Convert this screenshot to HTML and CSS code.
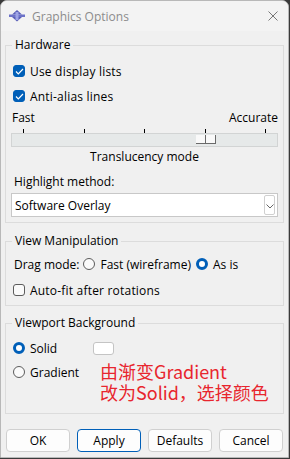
FILE: index.html
```html
<!DOCTYPE html>
<html>

<head>
    <title>Graphics Options</title>
    <link rel="stylesheet" href="styles.css">
</head>

<body>
    <div class="window">
        <div class="titlebar">
            <svg class="app-icon" width="16" height="12" viewBox="0 0 16 12">
                <polygon points="8,0 3,4.5 13,4.5" fill="#5a5fb8" />
                <rect x="0" y="4.5" width="16" height="2.5" fill="#6c72c8" />
                <polygon points="3,7 13,7 8,11.5" fill="#5a5fb8" />
                <rect x="6.5" y="2" width="3" height="8" fill="#9ea4e6" />
            </svg>
            <span class="title">Graphics Options</span>
            <svg class="close" width="10" height="10" viewBox="0 0 10 10">
                <path d="M0.5 0.5 L9.5 9.5 M9.5 0.5 L0.5 9.5" stroke="#777" stroke-width="1" />
            </svg>
        </div>

        <div class="content">
            <fieldset class="group hardware">
                <legend>Hardware</legend>
                <label class="row check-row first">
                    <span class="checkbox checked"><svg width="9" height="7" viewBox="0 0 9 7"><path d="M1 3.5 L3.3 5.8 L8 1" stroke="#fff" stroke-width="1.2" fill="none" /></svg></span>
                    Use display lists
                </label>
                <label class="row check-row second">
                    <span class="checkbox checked"><svg width="9" height="7" viewBox="0 0 9 7"><path d="M1 3.5 L3.3 5.8 L8 1" stroke="#fff" stroke-width="1.2" fill="none" /></svg></span>
                    Anti-alias lines
                </label>
                <div class="speed-labels">
                    <span>Fast</span>
                    <span>Accurate</span>
                </div>
                <div class="ticks">
                    <span></span><span></span><span></span><span></span><span></span>
                </div>
                <div class="track">
                    <div class="thumb"><span></span><span></span></div>
                </div>
                <div class="caption">Translucency mode</div>
                <div class="field-label">Highlight method:</div>
                <div class="select">
                    <span>Software Overlay</span>
                    <span class="drop">
                        <svg width="8" height="5" viewBox="0 0 8 5"><path d="M0.5 0.5 L4 4 L7.5 0.5" stroke="#666" fill="none" /></svg>
                    </span>
                </div>
            </fieldset>

            <fieldset class="group view">
                <legend>View Manipulation</legend>
                <div class="row drag-row">
                    <span class="drag-label">Drag mode:</span>
                    <label class="radio-opt"><span class="radio"></span>Fast (wireframe)</label>
                    <label class="radio-opt"><span class="radio selected"></span>As is</label>
                </div>
                <label class="row check-row autofit">
                    <span class="checkbox"></span>
                    Auto-fit after rotations
                </label>
            </fieldset>

            <fieldset class="group viewport">
                <legend>Viewport Background</legend>
                <div class="row solid-row">
                    <label class="radio-opt bg-opt"><span class="radio selected"></span>Solid</label>
                    <span class="swatch"></span>
                </div>
                <div class="gradient-row">
                    <label class="radio-opt bg-opt"><span class="radio"></span>Gradient</label>
                    <div class="note">
                        <div>由渐变Gradient</div>
                        <div>改为Solid，选择颜色</div>
                    </div>
                </div>
            </fieldset>

            <div class="buttons">
                <button>OK</button>
                <button class="default">Apply</button>
                <button>Defaults</button>
                <button>Cancel</button>
            </div>
        </div>
    </div>
</body>

</html>
```

FILE: styles.css
```css
html {
    background-color: #3a3a3a;
}

body {
    margin: 0;
    font-family: "Open Sans", "Noto Sans CJK SC", sans-serif;
    font-size: 12px;
    color: #000;
}

.window {
    width: 287px;
    height: 456px;
    background-color: #f0f0f0;
    border: 1px solid #b8b8b8;
    border-radius: 7px 7px 0 0;
    overflow: hidden;
}

.titlebar {
    height: 30px;
    display: flex;
    align-items: center;
    padding-left: 8px;
    background-color: #f3f3f3;
}

.app-icon {
    margin-right: 7px;
}

.title {
    color: #8c8c8c;
    flex: 1;
}

.close {
    margin-right: 10px;
}

.content {
    padding: 0 4px;
}

.group {
    margin: 0;
    padding: 0 5px;
    border: 1px solid #dcdcdc;
    border-radius: 0;
}

.group legend {
    padding: 0 3px;
    margin-left: 1px;
    line-height: 16px;
}

.hardware {
    margin-top: 6px;
    padding-bottom: 5px;
}

.row {
    display: flex;
    align-items: center;
    height: 20px;
}

.check-row {
    padding-left: 2px;
    letter-spacing: 0.2px;
}

.first {
    margin-top: 8px;
}

.second {
    margin-top: 5px;
}

.checkbox {
    width: 12px;
    height: 12px;
    box-sizing: border-box;
    border: 1px solid #5c5c5c;
    border-radius: 3px;
    background-color: #fafafa;
    margin-right: 5px;
    display: flex;
    align-items: center;
    justify-content: center;
}

.checkbox.checked {
    background-color: #005fb8;
    border-color: #005fb8;
}

.speed-labels {
    display: flex;
    justify-content: space-between;
    height: 18px;
    line-height: 18px;
    margin-top: 3px;
    padding: 0 0 0 1px;
}

.ticks {
    display: flex;
    justify-content: space-between;
    padding: 0 12px;
    margin-top: 2px;
    height: 4px;
}

.ticks span {
    width: 1px;
    height: 4px;
    background-color: #000;
}

.track {
    position: relative;
    height: 14px;
    box-sizing: border-box;
    background-color: #e6e9e9;
    border: 1px solid #d2d4d4;
}

.thumb {
    position: absolute;
    left: 184px;
    top: 1px;
    display: flex;
}

.thumb span {
    width: 9px;
    height: 8px;
    background-color: #f9f9f9;
    border-right: 1px solid #6a6a6a;
    border-bottom: 1px solid #6a6a6a;
}

.caption {
    text-align: center;
    margin-top: 2px;
    height: 16px;
    line-height: 16px;
}

.field-label {
    margin-top: 9px;
    padding-left: 3px;
    height: 16px;
    line-height: 16px;
}

.select {
    margin-top: 3px;
    height: 24px;
    box-sizing: border-box;
    border: 1px solid #c8c8c8;
    background-color: #fff;
    display: flex;
    align-items: center;
    justify-content: space-between;
    padding: 0 2px 0 3px;
}

.drop {
    width: 11px;
    height: 20px;
    box-sizing: border-box;
    border: 1px solid #d0d0d0;
    border-radius: 2px;
    display: flex;
    align-items: flex-end;
    justify-content: center;
    padding-bottom: 5px;
}

.view {
    margin-top: 10px;
    padding-bottom: 5px;
}

.drag-row {
    margin-top: 5px;
    padding-left: 3px;
}

.drag-label {
    margin-right: 4px;
}

.radio-opt {
    display: flex;
    align-items: center;
    margin-right: 5px;
}

.radio {
    width: 12px;
    height: 12px;
    box-sizing: border-box;
    border: 1px solid #5c5c5c;
    border-radius: 50%;
    background-color: #fafafa;
    margin-right: 5px;
}

.radio.selected {
    border: 3.5px solid #005fb8;
    background-color: #fff;
}

.autofit {
    margin-top: 6px;
}

.viewport {
    margin-top: 9px;
    padding-bottom: 10px;
}

.solid-row {
    margin-top: 7px;
    padding-left: 2px;
}

.bg-opt {
    width: 80px;
    margin-right: 0;
}

.swatch {
    width: 21px;
    height: 13px;
    box-sizing: border-box;
    border: 1px solid #c4c4c4;
    border-radius: 3px;
    background-color: #fff;
}

.gradient-row {
    display: flex;
    align-items: flex-start;
    margin-top: 4px;
    padding-left: 2px;
}

.gradient-row .bg-opt {
    height: 20px;
    width: 87px;
}

.note {
    color: #e8262e;
    font-family: "Noto Sans CJK SC", sans-serif;
    font-size: 18px;
    margin-top: -1px;
    white-space: nowrap;
}

.note div {
    height: 21px;
    line-height: 21px;
}

.buttons {
    display: flex;
    gap: 7px;
    margin-top: 15px;
    padding-left: 1px;
}

button {
    width: 64px;
    height: 23px;
    font-family: "Open Sans", sans-serif;
    font-size: 12px;
    color: #000;
    background-color: #fdfdfd;
    border: 1px solid #d0d0d0;
    border-radius: 4px;
    padding: 0;
}

button.default {
    border-color: #005fb8;
}
```
